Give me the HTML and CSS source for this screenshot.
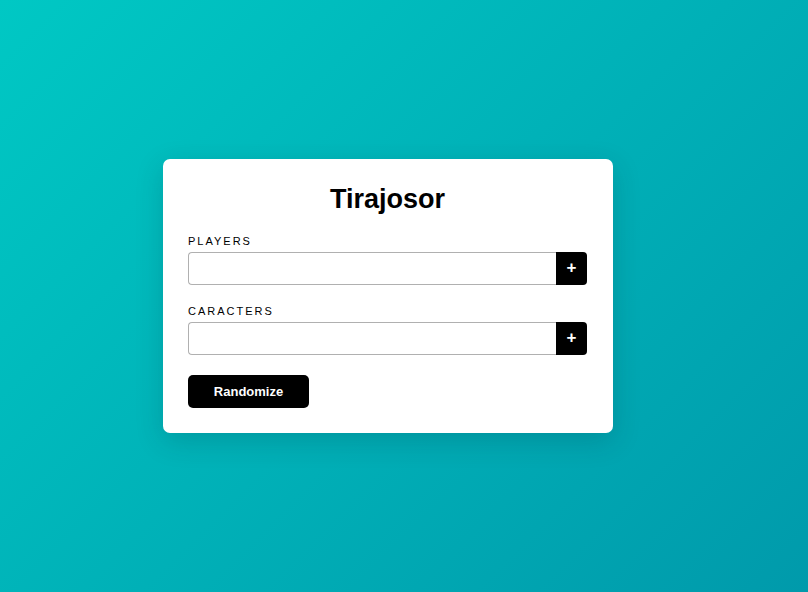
FILE: index.html
```html
<!DOCTYPE html>
<html>
<head>
<meta charset="utf-8">
<link rel="stylesheet" href="styles.css">
</head>
<body>
<main class="page">
  <section class="card">
    <h1 class="title">Tirajosor</h1>
    <div class="field">
      <label class="label">PLAYERS</label>
      <div class="row">
        <input class="input" type="text">
        <button class="add">+</button>
      </div>
    </div>
    <div class="field">
      <label class="label">CARACTERS</label>
      <div class="row">
        <input class="input" type="text">
        <button class="add">+</button>
      </div>
    </div>
    <button class="go">Randomize</button>
  </section>
</main>
</body>
</html>
```
FILE: styles.css
```css
html, body {
  margin: 0;
  height: 100%;
}
body {
  background: linear-gradient(135deg, #00c8c4 0%, #009aab 100%);
  font-family: "Liberation Sans", Arial, sans-serif;
}
.page {
  height: 100%;
  display: flex;
  align-items: center;
  justify-content: center;
  padding-right: 32px;
  box-sizing: border-box;
}
.card {
  width: 450px;
  box-sizing: border-box;
  background: #fff;
  border-radius: 7px;
  padding: 25px 26px 25px 25px;
  box-shadow: 0 8px 28px rgba(0, 40, 50, 0.18);
  display: flex;
  flex-direction: column;
}
.title {
  margin: 0 0 20px 0;
  text-align: center;
  font-size: 27px;
  font-weight: bold;
  line-height: 31px;
  color: #000;
}
.field {
  display: flex;
  flex-direction: column;
  gap: 4px;
  margin-bottom: 20px;
}
.label {
  font-size: 11px;
  line-height: 13px;
  letter-spacing: 2px;
  color: #000;
}
.row {
  display: flex;
  height: 33px;
}
.input {
  flex: 1;
  margin: 0;
  border: 1px solid #b0b0b0;
  border-right: none;
  border-radius: 4px 0 0 4px;
  padding: 0 8px;
  font-size: 14px;
  outline: none;
}
.add {
  width: 31px;
  margin: 0;
  border: none;
  background: #000;
  color: #fff;
  border-radius: 0 4px 4px 0;
  font-family: "Liberation Sans", Arial, sans-serif;
  font-size: 17px;
  font-weight: bold;
  line-height: 1;
  padding: 0 0 2px 0;
}
.go {
  align-self: flex-start;
  width: 121px;
  height: 33px;
  border: none;
  border-radius: 5px;
  background: #000;
  color: #fff;
  font-family: "Liberation Sans", Arial, sans-serif;
  font-size: 13px;
  font-weight: bold;
  padding: 0;
}
```
